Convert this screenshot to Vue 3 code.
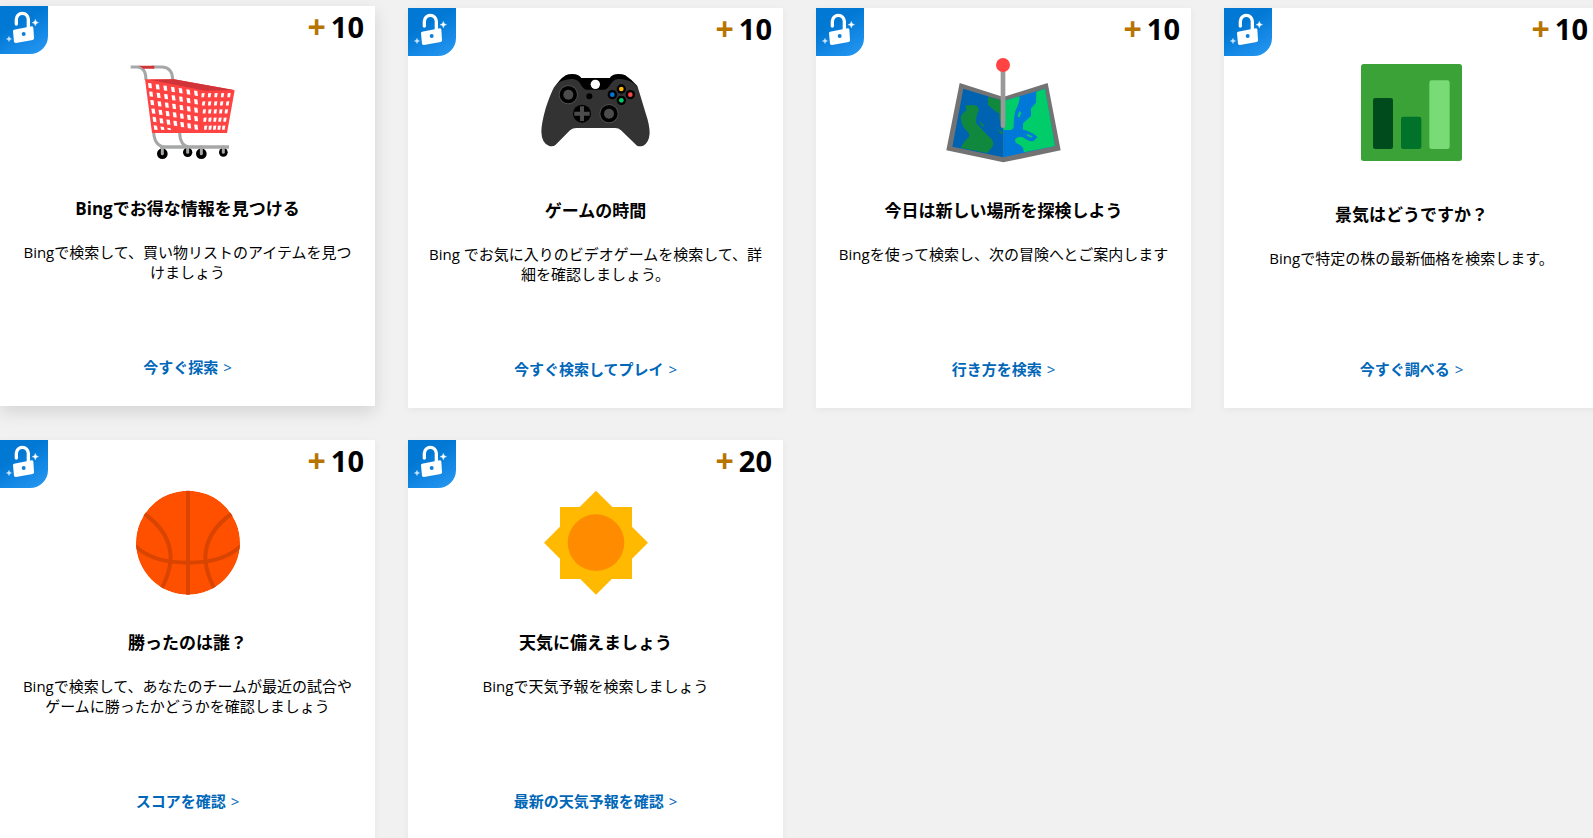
<script setup>

  import { ref } from "vue";

  const cards = ref([
    { id: "cart",  points: 10, title: "Bingでお得な情報を見つける", text: "Bingで検索して、買い物リストのアイテムを見つけましょう", link: "今すぐ探索", active: true },
    { id: "game",  points: 10, title: "ゲームの時間", text: "Bing でお気に入りのビデオゲームを検索して、詳細を確認しましょう。", link: "今すぐ検索してプレイ" },
    { id: "map",   points: 10, title: "今日は新しい場所を探検しよう", text: "Bingを使って検索し、次の冒険へとご案内します", link: "行き方を検索" },
    { id: "chart", points: 10, title: "景気はどうですか？", text: "Bingで特定の株の最新価格を検索します。", link: "今すぐ調べる" },
    { id: "ball",  points: 10, title: "勝ったのは誰？", text: "Bingで検索して、あなたのチームが最近の試合やゲームに勝ったかどうかを確認しましょう", link: "スコアを確認" },
    { id: "sun",   points: 20, title: "天気に備えましょう", text: "Bingで天気予報を検索しましょう", link: "最新の天気予報を確認" },
  ]);

  // holes of the shopping basket: long side, then the short side
  function basketHoles() {
    const holes = [];
    for (let r = 0; r < 6; r++) {
      for (let c = 0; c < 7; c++) {
        const x = 450 + 23 * c + r * (3.4 - 0.55 * c);
        const y = 257 + 25.4 * r + 3.8 * c;
        const bottom = Math.min(y + 8, 390);
        if (bottom - y < -5) continue;
        holes.push(`M${x - 6} ${y - 8}L${x + 4} ${y - 7}L${x + 6} ${bottom}L${x - 4} ${bottom - 1}Z`);
      }
    }
    for (let r = 0; r < 5; r++) {
      for (let c = 0; c < 5; c++) {
        const x = 609 + 19.5 * c + r * (2 - 1.5 * c);
        const y = 286 + 24.4 * r;
        holes.push(`M${x - 4} ${y - 6}L${x + 5} ${y - 7}L${x + 3} ${y + 6}L${x - 5} ${y + 6}Z`);
      }
    }
    return holes.join("");
  }

  const holesPath = basketHoles();

  const wheels = [
    { x: 487, y: 461, r: 16 },
    { x: 563, y: 457, r: 14 },
    { x: 604, y: 461, r: 16 },
    { x: 670, y: 457, r: 13 },
  ];

  const padButtons = [
    { x: 664, y: 267, color: "#ffb900" },
    { x: 637, y: 284, color: "#0078d7" },
    { x: 691, y: 284, color: "#ff4343" },
    { x: 664, y: 301, color: "#00cc6a" },
  ];

</script>

<template>
  <main class="cards">
    <article v-for="card in cards" :key="card.id" class="card" :class="{ active: card.active }">
      <div class="badge">
        <svg viewBox="0 0 144 144" aria-hidden="true">
          <path d="M49 54V40a18 18 0 0 1 36 0V68" fill="none" stroke="#fff" stroke-width="10" stroke-linecap="round" />
          <path d="M42 71L95 61Q99 61 100 65L102 97Q102 101 98 102L48 111Q43 111 42 107L39 76Q39 72 42 71Z" fill="#fff" />
          <circle cx="71" cy="84" r="6" fill="#0d80db" />
          <path d="M106 40Q107 49 116 50Q107 51 106 60Q105 51 96 50Q105 49 106 40Z" fill="#fff" stroke="#fff" />
          <path d="M27 91Q28 98 35 99Q28 100 27 107Q26 100 19 99Q26 98 27 91Z" fill="#cfe6fa" stroke="#cfe6fa" />
        </svg>
      </div>
      <div class="points"><span class="plus">+</span><span class="amount">{{ card.points }}</span></div>

      <svg v-if="card.id === 'cart'" class="picture" viewBox="384 168 357 318" aria-hidden="true">
        <g fill="none" stroke="#a5a8a6" stroke-width="9">
          <path d="M392 201H414Q438 204 438 240" />
          <path d="M455 201H488Q518 204 518 240" />
          <path d="M461 398Q464 440 496 441H687" />
          <path d="M539 398Q540 436 566 441" />
        </g>
        <path d="M415 197H463V206H430Q424 200 415 197Z" fill="#d13438" />
        <path d="M435 238H522L704 271L681 399H456Z" fill="#ff4343" />
        <path d="M450 239L522 238L702 270L615 272Z" fill="#d13438" />
        <path :d="holesPath" fill="#fff" />
        <g v-for="wheel in wheels" :key="wheel.x">
          <circle :cx="wheel.x" :cy="wheel.y" :r="wheel.r" />
          <path :d="`M${wheel.x} 440V${wheel.y}`" stroke="#a5a8a6" stroke-width="9" stroke-linecap="round" />
        </g>
        <path d="M480 441H687" stroke="#a5a8a6" stroke-width="9" />
      </svg>

      <svg v-else-if="card.id === 'game'" class="picture" viewBox="408 174 357 318" aria-hidden="true">
        <path d="M464 262Q478 238 497 226Q504 222 518 222Q536 222 544 234H629Q637 222 655 222Q668 222 676 226Q694 238 712 258L714 270L620 290H555Z" />
        <path d="M462 262Q472 247 487 242Q506 236 518 237Q533 238 540 250Q550 269 560 269H613Q623 268 632 252Q640 238 654 237Q668 236 687 242Q706 250 714 264Q724 296 737 340Q749 375 749 400Q747 428 730 437Q718 441 711 437L663 391Q656 384 645 384H529Q518 384 510 391L467 434Q460 441 448 438Q425 430 424 395Q424 372 437 325Q450 285 462 262Z" fill="#333" />
        <circle cx="586" cy="253" r="14" fill="#fff" />
        <g v-for="stick in [[505, 284], [627, 341]]" :key="stick[0]">
          <circle :cx="stick[0]" :cy="stick[1]" r="29" fill="#4c4c4c" />
          <circle :cx="stick[0]" :cy="stick[1]" r="26" />
          <circle :cx="stick[0]" :cy="stick[1]" r="15" fill="#4c4c4c" />
        </g>
        <circle cx="546" cy="341" r="27" />
        <path d="M546 319V363M523 341H569" stroke="#4c4c4c" stroke-width="12" />
        <circle cx="568" cy="289" r="9" />
        <g v-for="button in padButtons" :key="button.color">
          <circle :cx="button.x" :cy="button.y" r="14" />
          <circle :cx="button.x" :cy="button.y" r="7" :fill="button.color" />
        </g>
      </svg>

      <svg v-else-if="card.id === 'map'" class="picture" viewBox="432 174 357 318" aria-hidden="true">
        <path d="M479 249L610 291L743 249L782 451L610 487L439 451Z" fill="#737373" />
        <path d="M490 266L610 303V472L457 440Z" fill="#0063b1" />
        <path d="M610 303L735 266L765 438L610 472Z" fill="#0078d7" />
        <path d="M496 317Q515 313 531 317L537 330Q528 345 528 368Q545 388 575 418Q584 432 576 442L562 459L483 444Q490 425 506 412Q512 402 500 392Q484 380 482 350Q488 338 500 330Z" fill="#10893e" />
        <path d="M564 290L610 303V376Q596 370 598 340Q588 338 582 330L564 315Z" fill="#10893e" />
        <path d="M538 359L545 371L553 376L551 380L542 376Z" fill="#10893e" />
        <path d="M588 384L596 390L608 396V402L600 400L598 394Z" fill="#10893e" />
        <path d="M610 303L659 289Q658 312 648 328Q641 345 641 380Q640 391 625 390H610Z" fill="#00cc6a" />
        <path d="M709 275L735 266L765 438L672 457Q670 438 656 433Q642 427 646 417Q655 407 670 412Q688 426 700 423L712 412Q692 395 669 389V370L693 348V325L708 308Z" fill="#00cc6a" />
        <path d="M670 390Q692 393 711 410L700 423Q688 425 668 411L650 408Z" fill="#0078d7" />
        <path d="M658 333L664 338L659 352L652 350Z" fill="#00cc6a" />
        <path d="M680 401L699 409L694 413L681 407Z" fill="#00cc6a" />
        <path d="M609 205V377" stroke="#999" stroke-width="14" stroke-linecap="round" />
        <circle cx="609" cy="195" r="21" fill="#ff4343" />
      </svg>

      <svg v-else-if="card.id === 'chart'" class="picture tall" viewBox="456 174 357 330" aria-hidden="true">
        <rect x="483" y="192" width="303" height="291" rx="8" fill="#3aa237" />
        <rect x="519" y="294" width="60" height="153" rx="7" fill="#004b1c" />
        <rect x="603" y="350" width="61" height="97" rx="7" fill="#007229" />
        <rect x="688" y="241" width="61" height="206" rx="7" fill="#79db75" />
      </svg>

      <svg v-else-if="card.id === 'ball'" class="picture" viewBox="384 180 357 318" aria-hidden="true">
        <clipPath id="ball-edge"><circle cx="564" cy="338" r="156" /></clipPath>
        <g clip-path="url(#ball-edge)">
          <circle cx="564" cy="338" r="156" fill="#ff5000" />
          <g fill="none" stroke="#d94400" stroke-width="12">
            <path d="M564 180V496" />
            <path d="M430 249Q512 306 512 385Q509 432 484 477" />
            <path d="M698 249Q616 306 616 385Q619 432 644 477" />
            <path d="M404 346Q455 398 564 398Q673 398 724 346" />
          </g>
        </g>
      </svg>

      <svg v-else class="picture" viewBox="408 180 357 318" aria-hidden="true">
        <path d="M480 231H696V447H480Z" fill="#ffb900" />
        <path d="M588 182L744 338L588 494L432 338Z" fill="#ffb900" />
        <circle cx="588" cy="338" r="85" fill="#ff8c00" />
      </svg>

      <h3>{{ card.title }}</h3>
      <p>{{ card.text }}</p>
      <a href="#" class="card-link">{{ card.link }} <span class="arrow">&gt;</span></a>
    </article>
  </main>
</template>

<style>
html {
  scrollbar-width: none;
}
body {
  margin: 0;
  overflow-x: hidden;
  background: #f1f1f1;
}
</style>

<style scoped>
.cards {
  display: grid;
  grid-template-columns: repeat(4, 1fr);
  gap: 32px 33px;
  /* the last column runs slightly past the edge */
  margin-right: -6px;
  padding-top: 8px;
  font-family: "Open Sans", "Noto Sans CJK JP", sans-serif;
  color: #000;
}
.card {
  position: relative;
  display: flex;
  flex-direction: column;
  align-items: center;
  box-sizing: border-box;
  min-height: 400px;
  padding: 50px 18px 29px;
  background: #fff;
  box-shadow: 0 2px 8px rgba(0, 0, 0, 0.05);
  text-align: center;
}
.card.active {
  transform: translateY(-2px);
  box-shadow: 0 6px 16px rgba(0, 0, 0, 0.12);
}
.badge {
  position: absolute;
  top: 0;
  left: 0;
  width: 48px;
  height: 48px;
  background: linear-gradient(150deg, #0078d4 35%, #2899f5);
  border-bottom-right-radius: 18px;
}
.badge svg {
  display: block;
  width: 100%;
  height: 100%;
}
.points {
  position: absolute;
  top: 1px;
  right: 11px;
  display: flex;
  align-items: center;
  gap: 5px;
  line-height: 40px;
}
.plus {
  color: #b87400;
  font-size: 32px;
  font-weight: 700;
}
.amount {
  font-size: 29px;
  font-weight: 700;
}
.picture {
  display: block;
  flex: none;
  width: 119px;
  height: 106px;
}
.picture.tall {
  height: 110px;
}
h3 {
  margin: 35px 0 0;
  font-size: 17px;
  line-height: 24px;
  font-weight: 700;
}
p {
  margin: 21px 0 0;
  font-size: 15px;
  line-height: 20px;
}
.card-link {
  margin-top: auto;
  color: #0067b8;
  font-size: 15px;
  line-height: 20px;
  font-weight: 700;
  text-decoration: none;
}
.card-link:hover {
  text-decoration: underline;
}
.arrow {
  margin-left: 1px;
  font-weight: 400;
}
</style>
